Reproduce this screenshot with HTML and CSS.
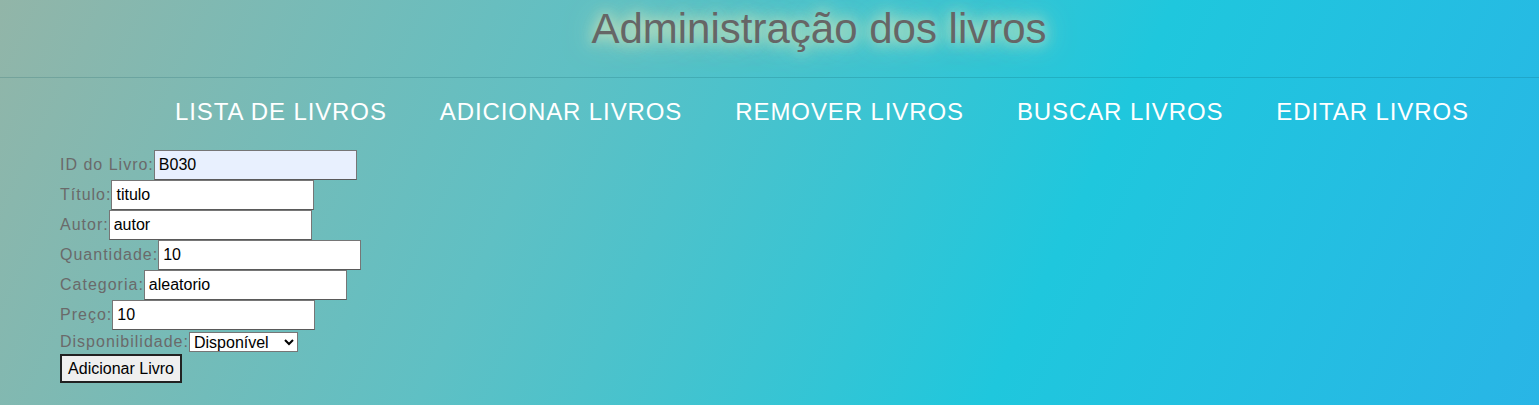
FILE: index.html
```html
<!DOCTYPE html>
<html lang="pt">
<head>
<meta charset="utf-8">
<title>Administração dos livros</title>
<link rel="stylesheet" href="styles.css">
</head>
<body>
<header class="header">
  <h1 class="title">Administração dos livros</h1>
</header>
<nav class="nav">
  <a class="nav-link" href="#">LISTA DE LIVROS</a>
  <a class="nav-link" href="#">ADICIONAR LIVROS</a>
  <a class="nav-link" href="#">REMOVER LIVROS</a>
  <a class="nav-link" href="#">BUSCAR LIVROS</a>
  <a class="nav-link" href="#">EDITAR LIVROS</a>
</nav>
<form class="book-form">
  <div class="row"><label class="lbl">ID do Livro:</label><input class="field field-auto" type="text" value="B030"></div>
  <div class="row"><label class="lbl">Título:</label><input class="field" type="text" value="titulo"></div>
  <div class="row"><label class="lbl">Autor:</label><input class="field" type="text" value="autor"></div>
  <div class="row"><label class="lbl">Quantidade:</label><input class="field" type="text" value="10"></div>
  <div class="row"><label class="lbl">Categoria:</label><input class="field" type="text" value="aleatorio"></div>
  <div class="row"><label class="lbl">Preço:</label><input class="field" type="text" value="10"></div>
  <div class="row row-select"><label class="lbl">Disponibilidade:</label><select class="sel"><option>Disponível</option><option>Indisponível</option></select></div>
  <div class="row-btn"><button class="btn" type="button">Adicionar Livro</button></div>
</form>
</body>
</html>
```
FILE: styles.css
```css
html, body {
  margin: 0;
  height: 100%;
}
body {
  font-family: "Liberation Sans", Arial, sans-serif;
  background: linear-gradient(115deg, #92b5a8 0%, #5fc0c4 35%, #1fc7dd 68%, #29b5e6 100%);
  overflow: hidden;
}
.header {
  padding: 5px 0 24px 99px;
  border-bottom: 1px solid rgba(0, 80, 90, 0.18);
  text-align: center;
}
.title {
  margin: 0;
  font-size: 42px;
  font-weight: normal;
  line-height: 48px;
  color: #666;
  text-shadow: 0 0 14px rgba(255, 245, 190, 0.9), 0 0 30px rgba(245, 240, 170, 0.7);
}
.nav {
  display: flex;
  justify-content: flex-end;
  gap: 53px;
  padding: 20px 70px 0 0;
  height: 72px;
  box-sizing: border-box;
}
.nav-link {
  color: #fff;
  text-decoration: none;
  font-size: 24px;
  line-height: 28px;
  letter-spacing: 0.9px;
}
.book-form {
  padding: 0 0 0 60px;
}
.row {
  display: flex;
  align-items: center;
  height: 30px;
}
.row-select {
  height: 23px;
}
.lbl {
  font-size: 16px;
  letter-spacing: 1px;
  color: #6a6a6a;
}
.field {
  width: 203px;
  height: 30px;
  box-sizing: border-box;
  border: 1px solid #767676;
  border-bottom-color: #5a5a5a;
  padding: 2px 4px;
  font-family: "Liberation Sans", Arial, sans-serif;
  font-size: 16px;
  color: #000;
  background: #fff;
}
.field-auto {
  background: #e8f0fe;
}
.sel {
  height: 20px;
  width: 109px;
  font-family: "Liberation Sans", Arial, sans-serif;
  font-size: 16px;
  padding: 0;
  border: 1px solid #767676;
  background: #fff;
  color: #000;
}
.row-btn {
  padding-top: 1px;
}
.btn {
  height: 29px;
  width: 122px;
  box-sizing: border-box;
  border: 2px solid #222;
  background: #efefef;
  font-family: "Liberation Sans", Arial, sans-serif;
  font-size: 16px;
  color: #000;
  padding: 0 4px;
}
```
